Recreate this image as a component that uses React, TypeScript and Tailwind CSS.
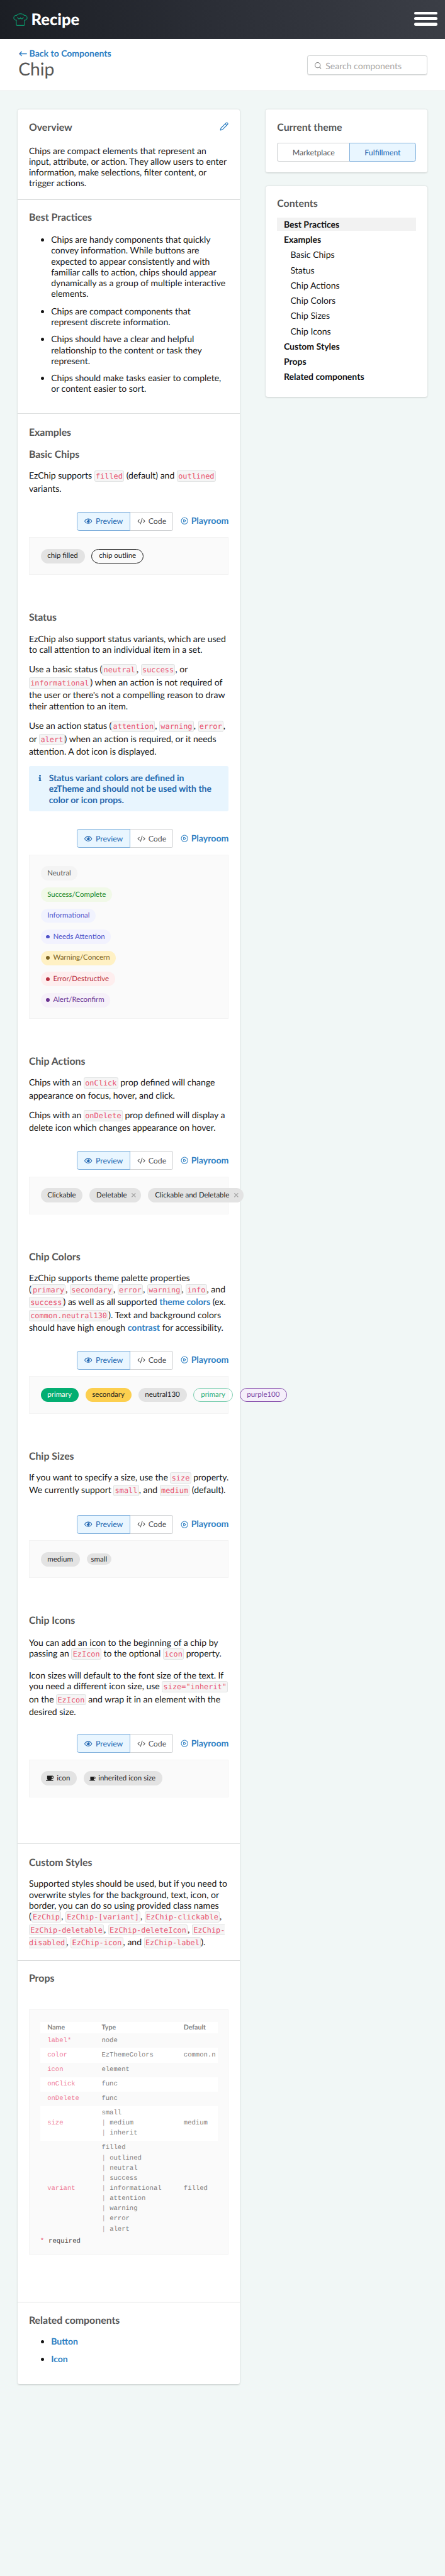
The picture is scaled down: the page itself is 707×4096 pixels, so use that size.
import type { ReactNode } from 'react';
import { CirclePlay, CodeXml, Pencil, Search, X } from 'lucide-react';
import { FaCoffee, FaInfo, FaRegEye } from 'react-icons/fa';

function ChefHat() {
  return (
    <svg viewBox="0 0 26 23" className="h-[23px] w-[26px] text-[#0c9168]" fill="none" stroke="currentColor" strokeWidth="1.4" strokeLinecap="round" strokeLinejoin="round">
      <path d="M5.5 12.6C2.7 12.2 1 10.5 1 8.2 1 5.6 3.3 3.6 6.3 4 7.4 1.9 10 .9 13 .9s5.6 1 6.7 3.1C22.7 3.6 25 5.6 25 8.2c0 2.3-1.7 4-4.5 4.4" />
      <path d="M8 7.4c.3 2 1.6 3 3 2.7 1.2-.2 1.8-1 2-2 .2 1 .8 1.8 2 2 1.4.3 2.700-.7 3-2.700" />
      <path d="M5.500 12.600V20.400c0 .9.600 1.500 1.500 1.500h12c.9 0 1.500-.6 1.500-1.500v-7.800" />
    </svg>
  );
}

function Code({ children }: { children: ReactNode }) {
  return (
    <code className="rounded-[3px] border border-[#e1e3e3] bg-[#f5f5f5] px-[1.4px] py-px font-['DejaVu_Sans_Mono',monospace] text-[13.5px] leading-[23.3px] text-[#e8526f]">
      {children}
    </code>
  );
}

function Heading({ children, className = '' }: { children: ReactNode; className?: string }) {
  return <h2 className={`text-[18px] leading-[22px] font-bold text-[#565656] ${className}`}>{children}</h2>;
}

function Link({ children }: { children: ReactNode }) {
  return <a className="font-bold text-[#2f80c3]">{children}</a>;
}

function Chip({ children, className = 'px-[12.200px] bg-[#e3e3e3] text-[#1d1d1d]' }: { children: ReactNode; className?: string }) {
  return (
    <span className={`flex h-[26px] shrink-0 items-center rounded-full text-[13px] leading-none whitespace-nowrap ${className}`}>
      {children}
    </span>
  );
}

function DeletableChip({ children }: { children: ReactNode }) {
  return (
    <span className="flex h-[26px] shrink-0 items-center gap-[6px] rounded-full bg-[#e3e3e3] pr-[8px] pl-[12.200px] text-[13px] leading-none whitespace-nowrap text-[#1d1d1d]">
      {children}
      <X className="h-3 w-3 text-[#a3a3a3]" strokeWidth={3} />
    </span>
  );
}

function StatusChip({ children, dot, className }: { children: ReactNode; dot?: boolean; className: string }) {
  return (
    <span className={`flex h-[26px] items-center gap-[6.500px] rounded-full pr-[11px] text-[13px] leading-none whitespace-nowrap ${dot ? 'pl-[9.500px]' : 'pl-3'} ${className}`}>
      {dot && <span className="h-[6.500px] w-[6.500px] rounded-full bg-current" />}
      {children}
    </span>
  );
}

function Controls() {
  return (
    <div className="flex h-[34px] items-center justify-end text-[14px]">
      <div className="flex h-[34px] w-[97px] items-center rounded-l-[4px] border border-[#7daedb] bg-[#e9f6ff] pl-[13px] text-[#2468b2]">
        <FaRegEye className="h-[13px] w-[14px]" />
        <span className="ml-[6px]">Preview</span>
      </div>
      <div className="flex h-[34px] w-[77px] items-center rounded-r-[4px] border border-l-0 border-[#cfd1d3] bg-white pl-[12px] text-[#565656]">
        <CodeXml className="h-[15px] w-[15px]" strokeWidth={2} />
        <span className="ml-[5px]">Code</span>
      </div>
      <div className="ml-[13px] flex items-center gap-[5px] text-[16px] font-bold text-[#2f80c3]">
        <CirclePlay className="h-[14px] w-[14px]" strokeWidth={2} />
        Playroom
      </div>
    </div>
  );
}

function Example({ title, text, preview, className }: { title: string; text: ReactNode; preview: ReactNode; className: string }) {
  return (
    <div>
      <Heading>{title}</Heading>
      <div className={`flex flex-col gap-[16px] ${className}`}>{text}</div>
      <Controls />
      <div className="mt-[11.700px] mb-[65.300px] border border-[#f3f3f3] bg-[#fafafa] p-5">{preview}</div>
    </div>
  );
}

const toc: [string, boolean][] = [
  ['Best Practices', true],
  ['Examples', true],
  ['Basic Chips', false],
  ['Status', false],
  ['Chip Actions', false],
  ['Chip Colors', false],
  ['Chip Sizes', false],
  ['Chip Icons', false],
  ['Custom Styles', true],
  ['Props', true],
  ['Related components', true],
];

const props: { name: string; required?: boolean; type: string[]; def?: string }[] = [
  { name: 'label', required: true, type: ['node'] },
  { name: 'color', type: ['EzThemeColors'], def: 'common.n' },
  { name: 'icon', type: ['element'] },
  { name: 'onClick', type: ['func'] },
  { name: 'onDelete', type: ['func'] },
  { name: 'size', type: ['small', 'medium', 'inherit'], def: 'medium' },
  {
    name: 'variant',
    type: ['filled', 'outlined', 'neutral', 'success', 'informational', 'attention', 'warning', 'error', 'alert'],
    def: 'filled',
  },
];

const card = 'rounded-[4px] bg-white shadow-[0_1px_3px_rgba(0,0,0,0.18)]';

export default function App() {
  return (
    <div className="min-h-[4638px] w-full bg-[#f1f7f6] font-[Lato,sans-serif] text-[15.900px] leading-[19.500px] text-[#151515] [text-rendering:geometricPrecision] [zoom:0.8832]">
      <header className="flex h-[70px] items-center justify-between bg-[linear-gradient(80deg,#1b1e24_0%,#2a2d35_45%,#3b3e46_100%)] pr-[14px] pl-[24px]">
        <div className="flex items-center">
          <ChefHat />
          <span className="ml-[6px] text-[29px] leading-[34px] font-black text-white">Recipe</span>
        </div>
        <div className="flex w-[41px] flex-col gap-[5.300px] pb-[3px]">
          <span className="h-[4.800px] rounded-full bg-white" />
          <span className="h-[4.800px] rounded-full bg-white" />
          <span className="h-[4.800px] rounded-full bg-white" />
        </div>
      </header>

      <div className="flex h-[94.500px] items-start justify-between border-b-2 border-[#e2e5e5] bg-white pr-[32px] pl-[33px]">
        <div className="pt-[16px]">
          <div>
            <Link>← Back to Components</Link>
          </div>
          <h1 className="mt-[1px] text-[32px] leading-[38px] text-[#565656]">Chip</h1>
        </div>
        <div className="mt-[30px] flex h-[35px] w-[216px] items-center rounded-[4px] border border-[#d2d5d5] bg-white pl-[11px] text-[#a5a5a5] shadow-[0_1px_1px_rgba(0,0,0,0.1)]">
          <Search className="h-[14px] w-[14px] text-[#777777]" strokeWidth={2} />
          <span className="mt-[2px] ml-[7px]">Search components</span>
        </div>
      </div>

      <div className="flex items-start justify-between pt-[32.500px] pr-[32px] pl-[32px]">
        <main className={`w-[399.500px] ${card}`}>
          <section className="h-[163px] border-b border-[#d3d5d5] px-5 pt-[21px]">
            <div className="flex justify-between">
              <Heading>Overview</Heading>
              <Pencil className="mt-[2px] h-[16px] w-[16px] text-[#2f80c3]" strokeWidth={2} />
            </div>
            <p className="mt-[21px]">
              Chips are compact elements that represent an input, attribute, or action. They allow users to enter information, make selections,
              filter content, or trigger actions.
            </p>
          </section>

          <section className="h-[385.300px] border-b border-[#dfe1e1] px-5 pt-[21px]">
            <Heading>Best Practices</Heading>
            <ul className="mt-[18.400px] flex list-disc flex-col gap-[11.600px] pl-10">
              <li>
                Chips are handy components that quickly convey information. While buttons are expected to appear consistently and with
                familiar calls to action, chips should appear dynamically as a group of multiple interactive elements.
              </li>
              <li>Chips are compact components that represent discrete information.</li>
              <li>Chips should have a clear and helpful relationship to the content or task they represent.</li>
              <li>Chips should make tasks easier to complete, or content easier to sort.</li>
            </ul>
          </section>

          <section className="h-[2575px] border-b border-[#dfe1e1] px-5 pt-[22px]">
            <Heading className="mb-[18px]">Examples</Heading>

            <Example
              title="Basic Chips"
              className="h-[92px] pt-[16.500px]"
              text={
                <p>
                  EzChip supports <Code>filled</Code> (default) and <Code>outlined</Code> variants.
                </p>
              }
              preview={
                <div className="flex gap-[12.400px]">
                  <Chip>chip filled</Chip>
                  <Chip className="border border-[#1d1d1d] px-[12.200px] text-[#1d1d1d]">chip outline</Chip>
                </div>
              }
            />

            <Example
              title="Status"
              className="h-[370.300px] pt-[17.400px]"
              text={
                <>
                  <p>EzChip also support status variants, which are used to call attention to an individual item in a set.</p>
                  <p>
                    Use a basic status (<Code>neutral</Code>, <Code>success</Code>, or <Code>informational</Code>) when an action is not
                    required of the user or there's not a compelling reason to draw their attention to an item.
                  </p>
                  <p>
                    Use an action status (<Code>attention</Code>, <Code>warning</Code>, <Code>error</Code>, or <Code>alert</Code>) when an
                    action is required, or it needs attention. A dot icon is displayed.
                  </p>
                  <div className="flex h-[81.600px] shrink-0 rounded-[3px] bg-[#e8f5fe] pt-3 pl-[16px] font-bold text-[#2468ad]">
                    <FaInfo className="mt-[4px] h-[12px] w-[8px] shrink-0" />
                    <p className="ml-[12px] w-[300px]">
                      Status variant colors are defined in ezTheme and should not be used with the color or icon props.
                    </p>
                  </div>
                </>
              }
              preview={
                <div className="flex flex-col items-start gap-3">
                  <StatusChip className="bg-[#f4f4f4] text-[#565656]">Neutral</StatusChip>
                  <StatusChip className="bg-[#f1f9e8] text-[#1c8b2c]">Success/Complete</StatusChip>
                  <StatusChip className="bg-[#f1f3fe] text-[#4f52c9]">Informational</StatusChip>
                  <StatusChip dot className="bg-[#f2f2fe] text-[#4f52c9]">Needs Attention</StatusChip>
                  <StatusChip dot className="bg-[#fff1c4] text-[#7c6424]">Warning/Concern</StatusChip>
                  <StatusChip dot className="bg-[#feeeee] text-[#b93040]">Error/Destructive</StatusChip>
                  <StatusChip dot className="bg-[#f6f1f9] text-[#6b3391]">Alert/Reconfirm</StatusChip>
                </div>
              }
            />

            <Example
              title="Chip Actions"
              className="h-[150.400px] pt-[16.500px]"
              text={
                <>
                  <p>
                    Chips with an <Code>onClick</Code> prop defined will change appearance on focus, hover, and click.
                  </p>
                  <p>
                    Chips with an <Code>onDelete</Code> prop defined will display a delete icon which changes appearance on hover.
                  </p>
                </>
              }
              preview={
                <div className="flex gap-[12.400px]">
                  <Chip>Clickable</Chip>
                  <DeletableChip>Deletable</DeletableChip>
                  <DeletableChip>Clickable and Deletable</DeletableChip>
                </div>
              }
            />

            <Example
              title="Chip Colors"
              className="h-[158px] pt-[17.400px]"
              text={
                <p>
                  EzChip supports theme palette properties (<Code>primary</Code>, <Code>secondary</Code>, <Code>error</Code>,{' '}
                  <Code>warning</Code>, <Code>info</Code>, and <Code>success</Code>) as well as all supported <Link>theme colors</Link> (ex.{' '}
                  <Code>common.neutral130</Code>). Text and background colors should have high enough <Link>contrast</Link> for
                  accessibility.
                </p>
              }
              preview={
                <div className="flex gap-[12.400px]">
                  <Chip className="bg-[#03ae72] px-[12.200px] text-white">primary</Chip>
                  <Chip className="bg-[#fccf4f] px-[12.200px] text-[#1d1d1d]">secondary</Chip>
                  <Chip>neutral130</Chip>
                  <Chip className="border border-[#7fcfb2] px-[12.200px] text-[#1fae7c]">primary</Chip>
                  <Chip className="border border-[#8a55ae] bg-[#f5effa] px-[12.200px] text-[#7a44a3]">purple100</Chip>
                </div>
              }
            />

            <Example
              title="Chip Sizes"
              className="h-[94.700px] pt-[16.500px]"
              text={
                <p>
                  If you want to specify a size, use the <Code>size</Code> property. We currently support <Code>small</Code>, and{' '}
                  <Code>medium</Code> (default).
                </p>
              }
              preview={
                <div className="flex items-center gap-[12.400px]">
                  <Chip>medium</Chip>
                  <span className="flex h-[20px] items-center rounded-full bg-[#e3e3e3] px-2 text-[13px] leading-none text-[#1d1d1d]">small</span>
                </div>
              }
            />

            <Example
              title="Chip Icons"
              className="h-[193.500px] pt-[18.400px]"
              text={
                <>
                  <p>
                    You can add an icon to the beginning of a chip by passing an <Code>EzIcon</Code> to the optional <Code>icon</Code>{' '}
                    property.
                  </p>
                  <p>
                    Icon sizes will default to the font size of the text. If you need a different icon size, use{' '}
                    <Code>size="inherit"</Code> on the <Code>EzIcon</Code> and wrap it in an element with the desired size.
                  </p>
                </>
              }
              preview={
                <div className="flex gap-[12.400px]">
                  <Chip>
                    <FaCoffee className="mr-[6px] -ml-[3px] h-[13px] w-[14px]" />
                    icon
                  </Chip>
                  <Chip>
                    <FaCoffee className="mr-[5px] -ml-[2px] h-[10px] w-[11px]" />
                    inherited icon size
                  </Chip>
                </div>
              }
            />
          </section>

          <section className="h-[209.700px] border-b border-[#d3d5d5] px-5 pt-[22px]">
            <Heading>Custom Styles</Heading>
            <p className="mt-[17px]">
              Supported styles should be used, but if you need to overwrite styles for the background, text, icon, or border, you can do so
              using provided class names (<Code>EzChip</Code>, <Code>EzChip-[variant]</Code>, <Code>EzChip-clickable</Code>,{' '}
              <Code>EzChip-deletable</Code>, <Code>EzChip-deleteIcon</Code>, <Code>EzChip-disabled</Code>, <Code>EzChip-icon</Code>, and{' '}
              <Code>EzChip-label</Code>).
            </p>
          </section>

          <section className="h-[615.300px] border-b border-[#dfe1e1] px-5 pt-[21.300px]">
            <Heading>Props</Heading>
            <div className="mt-[44.700px] h-[441.300px] border border-[#f3f3f3] bg-[#fafafa] px-[19px] pt-[21px] font-['Liberation_Mono',monospace] text-[12px] leading-[18.300px] text-[#808080]">
              <div>
                <div className="grid h-[21px] grid-cols-[97.700px_147.600px_1fr] items-center bg-white pl-[13px] font-[Lato,sans-serif] font-bold">
                  <span>Name</span>
                  <span>Type</span>
                  <span>Default</span>
                </div>
                {props.map((p, i) => (
                  <div
                    key={p.name}
                    className={`grid grid-cols-[97.700px_147.600px_1fr] items-center py-[3.900px] pl-[13px] ${i % 2 === 1 ? 'bg-white' : ''}`}
                  >
                    <span className="text-[#ef7d97]">
                      {p.name}
                      {p.required && '*'}
                    </span>
                    <div>
                      {p.type.map((t, n) => (
                        <div key={t}>
                          {n > 0 && <span className="text-[#a8a8a8]">{'| '}</span>}
                          {t}
                        </div>
                      ))}
                    </div>
                    <span className="whitespace-nowrap">{p.def}</span>
                  </div>
                ))}
              </div>
              <div className="text-[#3a3a3a]">
                <span className="mr-[8px] text-[#e8526f]">*</span>required
              </div>
            </div>
          </section>

          <section className="h-[147px] px-5 pt-[21.700px]">
            <Heading>Related components</Heading>
            <ul className="mt-[16.700px] flex list-disc flex-col gap-[11.800px] pl-10">
              <li>
                <Link>Button</Link>
              </li>
              <li>
                <Link>Icon</Link>
              </li>
            </ul>
          </section>
        </main>

        <aside className="flex w-[290.500px] flex-col gap-[24.300px]">
          <div className={`h-[113.700px] px-[20.500px] pt-[21px] ${card}`}>
            <Heading>Current theme</Heading>
            <div className="mt-[17px] flex h-[34px] text-[14px]">
              <div className="flex flex-1 items-center justify-center rounded-l-[4px] border border-r-0 border-[#cfd1d3] pt-px text-[#565656]">Marketplace</div>
              <div className="flex w-[119.500px] items-center justify-center rounded-r-[4px] border border-[#7daedb] bg-[#e9f6ff] pt-px text-[#2468b2]">
                Fulfillment
              </div>
            </div>
          </div>
          <div className={`h-[379px] px-[20.500px] pt-[21px] ${card}`}>
            <Heading>Contents</Heading>
            <div className="mt-[14px] flex flex-col gap-[4px]">
              {toc.map(([label, strong], i) => (
                <div
                  key={label}
                  className={`flex h-[23.450px] items-center ${strong ? 'pl-3 font-bold' : 'pl-6'} ${i === 0 ? 'bg-[#f2f2f2]' : ''}`}
                >
                  {label}
                </div>
              ))}
            </div>
          </div>
        </aside>
      </div>
    </div>
  );
}
